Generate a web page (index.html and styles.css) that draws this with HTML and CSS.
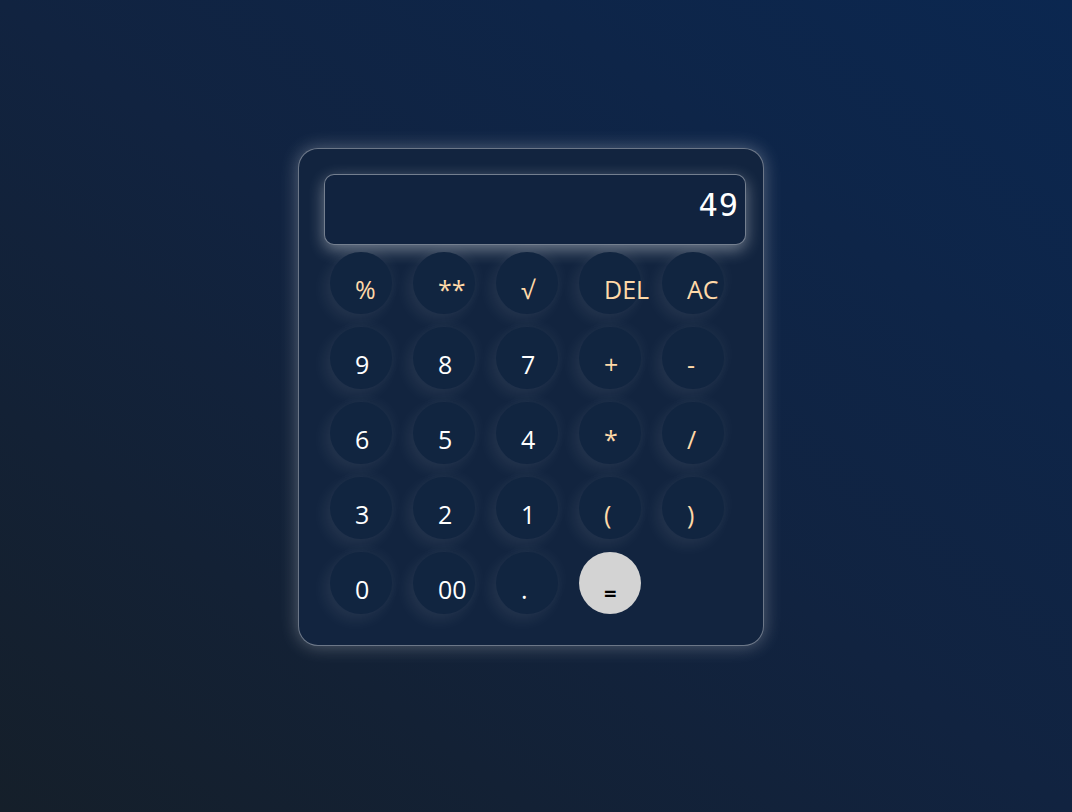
FILE: index.html
```html
<!DOCTYPE html>
<html lang="en">
<head>
<meta charset="utf-8">
<title>Calculator</title>
<link rel="stylesheet" href="styles.css">
</head>
<body>
<div class="page">
  <div class="calc">
    <div class="display">49</div>
    <div class="keys">
      <button class="key op">%</button>
      <button class="key op">**</button>
      <button class="key op">√</button>
      <button class="key op">DEL</button>
      <button class="key op">AC</button>
      <button class="key">9</button>
      <button class="key">8</button>
      <button class="key">7</button>
      <button class="key op">+</button>
      <button class="key op">-</button>
      <button class="key">6</button>
      <button class="key">5</button>
      <button class="key">4</button>
      <button class="key op">*</button>
      <button class="key op">/</button>
      <button class="key">3</button>
      <button class="key">2</button>
      <button class="key">1</button>
      <button class="key op">(</button>
      <button class="key op">)</button>
      <button class="key">0</button>
      <button class="key">00</button>
      <button class="key">.</button>
      <button class="key equal">=</button>
    </div>
  </div>
</div>
</body>
</html>
```
FILE: styles.css
```css
* { box-sizing: border-box; }
html, body { margin: 0; height: 100%; }
body {
  background: linear-gradient(to top right, #151f2a 0%, #112340 50%, #0b2750 100%);
  font-family: "Open Sans", "Noto Sans", sans-serif;
}
.page {
  padding: 148px 0 0 298px;
}
.calc {
  width: 466px;
  height: 498px;
  border: 1px solid rgba(255,255,255,0.38);
  border-radius: 20px;
  background: #12243f;
  box-shadow: 0 0 18px rgba(255,255,255,0.3);
  padding: 25px 0 0 25px;
}
.display {
  width: 422px;
  height: 71px;
  border: 1px solid rgba(255,255,255,0.42);
  border-radius: 10px;
  background: #11233f;
  box-shadow: 0 5px 16px rgba(255,255,255,0.4);
  color: #fff;
  font-family: "DejaVu Sans Mono", monospace;
  font-size: 32px;
  text-align: right;
  padding: 11px 6px 0 0;
  letter-spacing: 1px;
}
.keys {
  display: grid;
  grid-template-columns: repeat(5, 62px);
  grid-auto-rows: 62px;
  column-gap: 21px;
  row-gap: 13px;
  margin: 7px 0 0 6px;
}
.key {
  width: 62px;
  height: 62px;
  border: none;
  border-radius: 50%;
  background: #112540;
  box-shadow: -5px 6px 16px rgba(255,255,255,0.08), 4px -4px 12px rgba(255,255,255,0.035);
  color: #fff;
  font-family: "Open Sans", "Noto Sans", sans-serif;
  font-size: 25px;
  text-align: left;
  white-space: nowrap;
  padding: 13px 0 0 25px;
  line-height: 1.4;
  overflow: visible;
}
.op { color: #ffd9a8; }
.equal {
  background: #d3d3d3;
  color: #000;
  box-shadow: none;
  font-weight: 700;
  font-size: 22px;
  padding-top: 18px;
}
```
